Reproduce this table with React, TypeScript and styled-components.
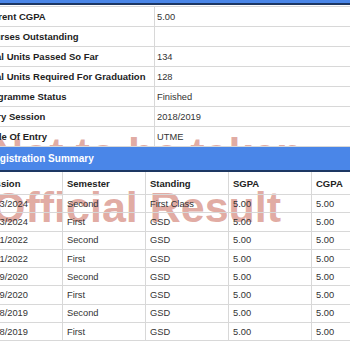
import React from 'react';
import styled, { createGlobalStyle } from 'styled-components';

const GlobalStyle = createGlobalStyle`
  html, body {
    margin: 0;
    padding: 0;
    background: #ffffff;
    overflow: hidden;
  }
  body {
    font-family: 'Liberation Sans', Arial, sans-serif;
    color: #333;
  }
`;

const Page = styled.div`
  position: relative;
  width: 415px;
  height: 350px;
  margin-left: -20px;
`;

const TopBar = styled.div`
  height: 3px;
  background: #4a86e8;
  border-bottom: 2px solid #1d3763;
  margin-bottom: 1px;
`;

const Content = styled.div`
  position: relative;
  z-index: 1;
`;

const InfoTable = styled.div`
  display: grid;
  grid-template-columns: 175px 1fr;
  border-top: 1px solid #d8d8d8;
`;

const InfoLabel = styled.div`
  height: 20px;
  box-sizing: border-box;
  padding: 0 2px;
  display: flex;
  align-items: center;
  font-size: 9.5px;
  font-weight: bold;
  color: #222;
  border-bottom: 1px solid #d8d8d8;
  border-right: 1px solid #d8d8d8;
`;

const InfoValue = styled.div`
  height: 20px;
  box-sizing: border-box;
  padding: 0 2px;
  display: flex;
  align-items: center;
  font-size: 9.3px;
  color: #333;
  border-bottom: 1px solid #d8d8d8;
`;

const SectionBar = styled.div`
  height: 25px;
  box-sizing: border-box;
  background: #4a86e8;
  border-bottom: 2px solid #1d3763;
  color: #ffffff;
  font-size: 10px;
  font-weight: bold;
  display: flex;
  align-items: center;
  padding-left: 7px;
`;

const SummaryTable = styled.div`
  display: grid;
  grid-template-columns: repeat(5, 83px);
  grid-auto-rows: 18.3px;
  grid-template-rows: 23px;
`;

const Cell = styled.div<{ $head?: boolean; $last?: boolean }>`
  box-sizing: border-box;
  padding: 0 4px;
  display: flex;
  align-items: center;
  font-size: ${(p) => (p.$head ? '9.5px' : '9.3px')};
  font-weight: ${(p) => (p.$head ? 'bold' : 'normal')};
  color: ${(p) => (p.$head ? '#222' : '#333')};
  border-bottom: 1px solid #d8d8d8;
  border-right: ${(p) => (p.$last ? 'none' : '1px solid #d8d8d8')};
`;

const Watermark = styled.div`
  position: absolute;
  left: 12px;
  top: 126px;
  z-index: 0;
  pointer-events: none;
  font-family: 'Liberation Sans', Arial, sans-serif;
  font-weight: bold;
  font-size: 43px;
  line-height: 54px;
  color: rgba(200, 100, 85, 0.55);
  white-space: nowrap;
`;

const info: [string, string][] = [
  ['Current CGPA', '5.00'],
  ['Courses Outstanding', ''],
  ['Total Units Passed So Far', '134'],
  ['Total Units Required For Graduation', '128'],
  ['Programme Status', 'Finished'],
  ['Entry Session', '2018/2019'],
  ['Mode Of Entry', 'UTME'],
];

const heads = ['Session', 'Semester', 'Standing', 'SGPA', 'CGPA'];

const rows: string[][] = [
  ['2023/2024', 'Second', 'First Class', '5.00', '5.00'],
  ['2023/2024', 'First', 'GSD', '5.00', '5.00'],
  ['2021/2022', 'Second', 'GSD', '5.00', '5.00'],
  ['2021/2022', 'First', 'GSD', '5.00', '5.00'],
  ['2019/2020', 'Second', 'GSD', '5.00', '5.00'],
  ['2019/2020', 'First', 'GSD', '5.00', '5.00'],
  ['2018/2019', 'Second', 'GSD', '5.00', '5.00'],
  ['2018/2019', 'First', 'GSD', '5.00', '5.00'],
];

export default function App() {
  return (
    <Page>
      <GlobalStyle />
      <Watermark>
        Not to be taken
        <br />
        Official Result
      </Watermark>
      <Content>
        <TopBar />
        <InfoTable>
          {info.map(([label, value]) => (
            <React.Fragment key={label}>
              <InfoLabel>{label}</InfoLabel>
              <InfoValue>{value}</InfoValue>
            </React.Fragment>
          ))}
        </InfoTable>
        <SectionBar>Registration Summary</SectionBar>
        <SummaryTable>
          {heads.map((h, i) => (
            <Cell key={h} $head $last={i === heads.length - 1}>
              {h}
            </Cell>
          ))}
          {rows.map((r, ri) =>
            r.map((c, ci) => (
              <Cell key={`${ri}-${ci}`} $last={ci === r.length - 1}>
                {c}
              </Cell>
            ))
          )}
        </SummaryTable>
      </Content>
    </Page>
  );
}
